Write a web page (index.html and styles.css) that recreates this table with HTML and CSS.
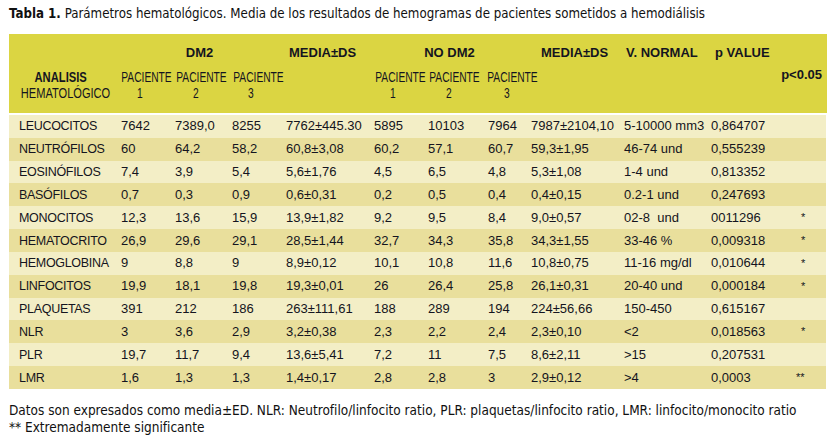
FILE: index.html
```html
<!DOCTYPE html>
<html lang="es">
<head>
<meta charset="utf-8">
<title>Tabla 1</title>
<link rel="stylesheet" href="styles.css">
</head>
<body>
<p class="caption"><b>Tabla 1.</b> Parámetros hematológicos. Media de los resultados de hemogramas de pacientes sometidos a hemodiálisis</p>
<div class="table">
  <div class="head">
    <div class="h1 dm2">DM2</div>
    <div class="h1 media1">MEDIA±DS</div>
    <div class="h1 nodm2">NO DM2</div>
    <div class="h1 media2">MEDIA±DS</div>
    <div class="h1 vnorm">V. NORMAL</div>
    <div class="h1 pval">p VALUE</div>
    <div class="h2 analisis"><span class="sq an"><b>ANALISIS</b></span><br><span class="sq hm">HEMATOLÓGICO</span></div>
    <div class="h2 c1"><span class="sq">PACIENTE</span><br><span class="sq">1</span></div>
    <div class="h2 c2"><span class="sq">PACIENTE</span><br><span class="sq">2</span></div>
    <div class="h2 c3"><span class="sq">PACIENTE</span><br><span class="sq">3</span></div>
    <div class="h2 c5"><span class="sq">PACIENTE</span><br><span class="sq">1</span></div>
    <div class="h2 c6"><span class="sq">PACIENTE</span><br><span class="sq">2</span></div>
    <div class="h2 c7"><span class="sq">PACIENTE</span><br><span class="sq">3</span></div>
    <div class="plt">p&lt;0.05</div>
  </div>
  <div class="body">
    <div class="row light"><span class="lbl">LEUCOCITOS</span><span>7642</span><span>7389,0</span><span>8255</span><span>7762±445.30</span><span>5895</span><span>10103</span><span>7964</span><span>7987±2104,10</span><span>5-10000 mm3</span><span>0,864707</span><span></span></div>
    <div class="row dark"><span class="lbl">NEUTRÓFILOS</span><span>60</span><span>64,2</span><span>58,2</span><span>60,8±3,08</span><span>60,2</span><span>57,1</span><span>60,7</span><span>59,3±1,95</span><span>46-74 und</span><span>0,555239</span><span></span></div>
    <div class="row light"><span class="lbl">EOSINÓFILOS</span><span>7,4</span><span>3,9</span><span>5,4</span><span>5,6±1,76</span><span>4,5</span><span>6,5</span><span>4,8</span><span>5,3±1,08</span><span>1-4 und</span><span>0,813352</span><span></span></div>
    <div class="row dark"><span class="lbl">BASÓFILOS</span><span>0,7</span><span>0,3</span><span>0,9</span><span>0,6±0,31</span><span>0,2</span><span>0,5</span><span>0,4</span><span>0,4±0,15</span><span>0.2-1 und</span><span>0,247693</span><span></span></div>
    <div class="row light"><span class="lbl">MONOCITOS</span><span>12,3</span><span>13,6</span><span>15,9</span><span>13,9±1,82</span><span>9,2</span><span>9,5</span><span>8,4</span><span>9,0±0,57</span><span>02-8&nbsp; und</span><span>0011296</span><span class="star">*</span></div>
    <div class="row dark"><span class="lbl">HEMATOCRITO</span><span>26,9</span><span>29,6</span><span>29,1</span><span>28,5±1,44</span><span>32,7</span><span>34,3</span><span>35,8</span><span>34,3±1,55</span><span>33-46 %</span><span>0,009318</span><span class="star">*</span></div>
    <div class="row light"><span class="lbl">HEMOGLOBINA</span><span>9</span><span>8,8</span><span>9</span><span>8,9±0,12</span><span>10,1</span><span>10,8</span><span>11,6</span><span>10,8±0,75</span><span>11-16 mg/dl</span><span>0,010644</span><span class="star">*</span></div>
    <div class="row dark"><span class="lbl">LINFOCITOS</span><span>19,9</span><span>18,1</span><span>19,8</span><span>19,3±0,01</span><span>26</span><span>26,4</span><span>25,8</span><span>26,1±0,31</span><span>20-40 und</span><span>0,000184</span><span class="star">*</span></div>
    <div class="row light"><span class="lbl">PLAQUETAS</span><span>391</span><span>212</span><span>186</span><span>263±111,61</span><span>188</span><span>289</span><span>194</span><span>224±56,66</span><span>150-450</span><span>0,615167</span><span></span></div>
    <div class="row dark"><span class="lbl">NLR</span><span>3</span><span>3,6</span><span>2,9</span><span>3,2±0,38</span><span>2,3</span><span>2,2</span><span>2,4</span><span>2,3±0,10</span><span>&lt;2</span><span>0,018563</span><span class="star">*</span></div>
    <div class="row light"><span class="lbl">PLR</span><span>19,7</span><span>11,7</span><span>9,4</span><span>13,6±5,41</span><span>7,2</span><span>11</span><span>7,5</span><span>8,6±2,11</span><span>&gt;15</span><span>0,207531</span><span></span></div>
    <div class="row dark"><span class="lbl">LMR</span><span>1,6</span><span>1,3</span><span>1,3</span><span>1,4±0,17</span><span>2,8</span><span>2,8</span><span>3</span><span>2,9±0,12</span><span>&gt;4</span><span>0,0003</span><span class="star dbl">**</span></div>
  </div>
</div>
<div class="notes">
  <p>Datos son expresados como media±ED. NLR: Neutrofilo/linfocito ratio, PLR: plaquetas/linfocito ratio, LMR: linfocito/monocito ratio</p>
  <p>** Extremadamente significante</p>
</div>
</body>
</html>
```
FILE: styles.css
```css
html, body {
  margin: 0;
  padding: 0;
  background: #ffffff;
}
body {
  padding: 0 0 0 9px;
  width: 818px;
  color: #111111;
}
.caption {
  margin: 0;
  padding-top: 6px;
  height: 34px;
  box-sizing: border-box;
  font-family: "DejaVu Sans Condensed", "DejaVu Sans", sans-serif;
  font-stretch: condensed;
  font-size: 13.2px;
  line-height: 16px;
  color: #111;
  white-space: nowrap;
}
.table {
  font-family: "Liberation Sans", Arial, sans-serif;
  color: #141420;
}
.head {
  background: #dbd542;
  height: 79px;
  box-sizing: border-box;
  padding: 11px 0 12px;
  display: grid;
  grid-template-columns: 103px 55px 57px 53px 89px 54px 58px 57px 89px 87px 116px;
  grid-template-rows: 16px 32px;
  row-gap: 8px;
}
.h1 {
  font-weight: bold;
  font-size: 13px;
  line-height: 16px;
  white-space: nowrap;
}
.h2 {
  font-size: 14px;
  line-height: 16px;
  text-align: center;
  white-space: nowrap;
  grid-row: 2;
}
.sq {
  display: inline-block;
  transform: scaleX(0.73);
  transform-origin: 50% 50%;
}
.sq.hm { transform: scaleX(0.79); }
.sq.an { transform: scaleX(0.8); }
.dm2 { grid-column: 2 / 5; text-align: center; padding-left: 10px; }
.media1 { grid-column: 5; padding-left: 12px; }
.nodm2 { grid-column: 6 / 9; text-align: center; padding-right: 2px; }
.media2 { grid-column: 9; padding-left: 6px; }
.vnorm { grid-column: 10; padding-left: 2px; }
.pval { grid-column: 11; padding-left: 4px; }
.analisis { grid-column: 1; }
.c1 { grid-column: 2; }
.c2 { grid-column: 3; }
.c3 { grid-column: 4; }
.c5 { grid-column: 6; }
.c6 { grid-column: 7; }
.c7 { grid-column: 8; }
.plt {
  grid-column: 11;
  grid-row: 2;
  font-weight: bold;
  font-size: 13px;
  line-height: 16px;
  text-align: right;
  padding-right: 5px;
  margin-top: -2px;
}
.body {
  margin-top: 2px;
  width: 817px;
}
.row {
  display: grid;
  grid-template-columns: 102px 54px 57px 54px 88px 54px 60px 43px 93px 87px 89px 26px;
  padding-left: 10px;
  height: 22.83px;
  align-items: center;
  font-size: 13px;
  line-height: 16px;
  white-space: nowrap;
}
.lbl {
  font-size: 12.5px;
  letter-spacing: -0.3px;
}
.row.light { background: #f3eec6; }
.row.dark { background: #e9df9c; }
.star {
  font-size: 11px;
  padding-left: 1px;
  align-self: start;
  padding-top: 3px;
}
.star.dbl { padding-left: 0; margin-left: -4px; }
.notes {
  margin-top: 13px;
  font-family: "DejaVu Sans Condensed", "DejaVu Sans", sans-serif;
  font-stretch: condensed;
  font-size: 13.5px;
  line-height: 17px;
  color: #111;
}
.notes p { margin: 0; white-space: nowrap; }
```
